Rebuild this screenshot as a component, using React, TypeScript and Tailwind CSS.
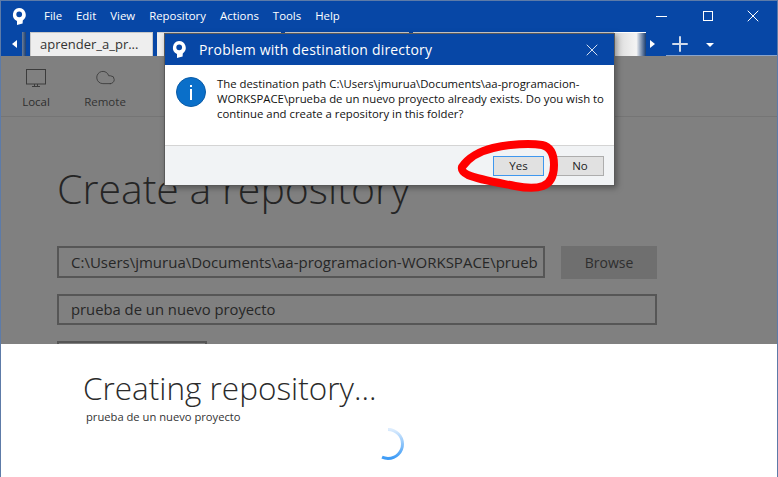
import React from 'react';
import { Cloud, X, Plus } from 'lucide-react';

const menus = ['File', 'Edit', 'View', 'Repository', 'Actions', 'Tools', 'Help'];

// Logo Sourcetree : cercle blanc troue avec une queue en bas
function Logo({ className }: { className: string }) {
  return (
    <svg viewBox="0 0 16 17" className={className}>
      <path
        fillRule="evenodd"
        fill="#fff"
        d="M8 0a6.8 6.8 0 0 1 3.8 12.4l-0.2 3.2L6 17v-4A6.8 6.8 0 0 1 8 0zM8.2 3.4a2.9 2.9 0 1 0 0 5.8a2.9 2.9 0 0 0 0-5.8z"
      />
    </svg>
  );
}

function Dialog() {
  return (
    <div className="absolute left-[164px] top-[33px] w-[451px] h-[153px] flex flex-col bg-white border border-[#5a5a5a] shadow-[2px_2px_6px_rgba(0,0,0,0.35)]">
      <div className="h-[31px] shrink-0 flex items-center bg-[#0747a6] text-white">
        <Logo className="w-[16px] h-[17px] ml-[6px]" />
        <span className="ml-[12px] text-[14px] tracking-[0.2px]">Problem with destination directory</span>
        <X className="w-[20px] h-[20px] ml-auto mr-[12px]" strokeWidth={1} />
      </div>
      <div className="flex-1 flex pl-[11px] pt-[11px]">
        <div className="w-[30px] h-[30px] shrink-0 mt-[1px] rounded-full bg-[#0a6fc9] border border-[#0a5ba6] flex flex-col items-center pt-[7px] gap-[2px]">
          <span className="w-[2px] h-[2px] bg-white block" />
          <span className="w-[2px] h-[11px] bg-white block" />
        </div>
        <p className="ml-[11px] text-[11.35px] leading-[15px] text-[#111] whitespace-nowrap">
          The destination path C:\Users\jmurua\Documents\aa-programacion-
          <br />
          WORKSPACE\prueba de un nuevo proyecto already exists. Do you wish to
          <br />
          continue and create a repository in this folder?
        </p>
      </div>
      <div className="h-[40px] shrink-0 bg-[#f1f3f5] border-t border-[#d4d4d4] flex items-center justify-end gap-[12px] pr-[10px]">
        <button className="w-[51px] h-[20px] bg-[#e1e1e1] border border-[#3f97ee] text-[11.5px] leading-none text-[#222]">Yes</button>
        <button className="w-[48px] h-[20px] bg-[#e1e1e1] border border-[#adadad] text-[11.5px] leading-none text-[#222]">No</button>
      </div>
    </div>
  );
}

export default function App() {
  return (
    <div className="relative w-[778px] h-[477px] overflow-hidden flex flex-col bg-white font-['Open_Sans','Noto_Sans',sans-serif]">
      {/* Barre de titre */}
      <div className="h-[32px] shrink-0 flex items-center bg-[#0747a6] text-white text-[11.4px]">
        <Logo className="w-[16px] h-[17px] ml-[11px]" />
        <div className="flex gap-[14px] ml-[17px]">
          {menus.map((m) => (
            <span key={m}>{m}</span>
          ))}
        </div>
        <div className="ml-auto flex items-center mr-[20px]">
          <span className="w-[11px] h-px bg-white" />
          <span className="ml-[36px] w-[10px] h-[10px] border border-white" />
          <X className="ml-[30px] w-[20px] h-[20px] -mr-[5px]" strokeWidth={1.2} />
        </div>
      </div>

      {/* Onglets */}
      <div className="h-[24px] shrink-0 flex items-end bg-[#0747a6]">
        <span className="ml-[12px] mb-[8px] w-0 h-0 border-y-[4px] border-y-transparent border-r-[5px] border-r-white" />
        <div className="ml-[5px] w-[4px] h-[24px] bg-linear-to-r from-[#6d7f99] to-[#1d3f70]" />
        <div className="ml-[4px] w-[123px] h-[24px] bg-[#eeeeee] border border-b-0 border-[#c8c8c8] text-[13px] text-[#333] pl-[9px] leading-[22px]">aprender_a_pr...</div>
        <div className="ml-[4px] w-[124px] h-[24px] bg-[#eeeeee] border-t border-[#d0d0d0]" />
        <div className="ml-[4px] w-[124px] h-[24px] bg-[#eeeeee] border-t border-[#d0d0d0]" />
        <div className="ml-[4px] w-[201px] h-[24px] bg-[#eeeeee] border-t border-[#d0d0d0]" />
        <div className="w-[32px] h-[24px] bg-linear-to-r from-[#d8d8d8] via-[#f4f4f4] via-70% to-[#1d3f70] border-t border-white" />
        <span className="ml-[4px] mb-[8px] w-0 h-0 border-y-[4px] border-y-transparent border-l-[5px] border-l-white" />
        <Plus className="ml-[13px] w-[24px] h-[24px] text-[#d0daea]" strokeWidth={2} />
        <span className="ml-[14px] mb-[9px] w-0 h-0 border-x-[4px] border-x-transparent border-t-[4px] border-t-white" />
      </div>
      <div className="absolute right-0 top-[55px] w-[112px] h-px bg-[#8aa4cc]" />

      {/* Contenu grise sous la modale */}
      <div className="h-[288px] shrink-0 flex flex-col bg-[#808080]">
        <div className="h-[61px] shrink-0 flex items-start border-b border-[#757575] text-[11.5px] text-[#2e2e2e]">
          <div className="ml-[21px] mt-[13px] w-[30px] flex flex-col items-center">
            <svg viewBox="0 0 20 18" className="w-[20px] h-[18px]" fill="none" stroke="#3c3c3c" strokeWidth="1">
              <rect x="0.5" y="0.5" width="19" height="14.5" />
              <path d="M8.5 15v2M11.5 15v2M6 17.5h8" />
            </svg>
            <span className="mt-[6px]">Local</span>
          </div>
          <div className="ml-[33px] mt-[11px] w-[42px] flex flex-col items-center">
            <Cloud className="w-[21px] h-[21px] text-[#3c3c3c]" strokeWidth={1} />
            <span className="mt-[5px] text-[#333]">Remote</span>
          </div>
        </div>
        <h1 className="ml-[57px] mt-[43px] text-[41px] leading-[56px] font-light text-[#252525]">Create a repository</h1>
        <div className="mt-[30px] ml-[57px] flex items-start">
          <div className="w-[488px] h-[32px] border-2 border-[#565656] pl-[12px] text-[15px] leading-[28px] text-[#272727]">
            <div className="w-[470px] overflow-hidden whitespace-nowrap">
              C:\Users\jmurua\Documents\aa-programacion-WORKSPACE\prueb
            </div>
          </div>
          <div className="ml-[16px] w-[96px] h-[33px] bg-[#6f6f6f] text-[14px] leading-[33px] text-center text-[#2e2e2e]">Browse</div>
        </div>
        <div className="mt-[15px] ml-[57px] w-[600px] h-[31px] border-2 border-[#565656] pl-[12px] text-[14.8px] leading-[27px] text-[#272727]">
          prueba de un nuevo proyecto
        </div>
        <div className="mt-[16px] ml-[57px] w-[150px] h-[3px] border-t-2 border-x-2 border-[#565656]" />
      </div>

      {/* Panneau blanc de progression */}
      <div className="flex-1 bg-white flex flex-col">
        <h2 className="ml-[83px] mt-[24px] text-[31.5px] leading-[40px] font-light text-[#2b2b2b]">Creating repository...</h2>
        <p className="ml-[86px] mt-[2px] text-[11.2px] leading-[14px] text-[#333]">prueba de un nuevo proyecto</p>
        <svg viewBox="0 0 36 36" className="ml-[370px] mt-[2px] w-[36px] h-[36px]">
          <defs>
            <linearGradient id="spin" x1="0" y1="0" x2="0" y2="1">
              <stop offset="0" stopColor="#dcecfd" />
              <stop offset="0.5" stopColor="#8cc4fa" />
              <stop offset="1" stopColor="#3d9bf6" />
            </linearGradient>
          </defs>
          <path d="M18 3.5a14.5 14.5 0 0 1 0 29a14.5 14.5 0 0 1-6-1.3" fill="none" stroke="url(#spin)" strokeWidth="3" />
        </svg>
      </div>

      <Dialog />

      {/* Trait rouge dessine a la main */}
      <svg className="absolute left-0 top-0 w-[778px] h-[477px] pointer-events-none" viewBox="0 0 778 477">
        <path
          d="M462 167C468 158 480 151 493 148C510 144 530 143 542 145C551 147 554 155 554 165C554 175 551 183 543 186C535 189 525 188 515 186C500 183 480 180 468 175C464 173 461 171 462 167Z"
          fill="none"
          stroke="#ff0000"
          strokeWidth="8"
          strokeLinejoin="round"
        />
      </svg>

      {/* Liseré de la fenetre */}
      <div className="absolute inset-0 border-x border-t border-[#5d7ba8] pointer-events-none" />
    </div>
  );
}
